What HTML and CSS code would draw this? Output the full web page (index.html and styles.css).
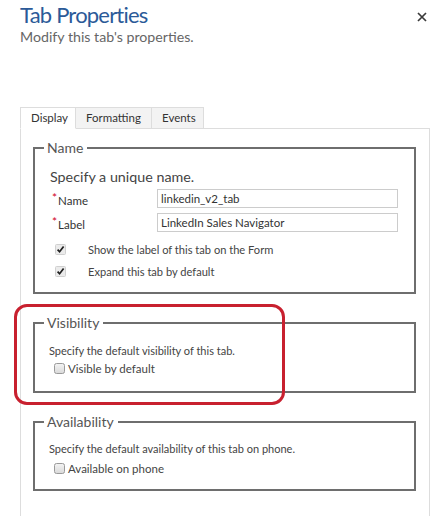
FILE: index.html
```html
<!DOCTYPE html>
<html lang="en">
<head>
<meta charset="utf-8">
<title>Tab Properties</title>
<link rel="stylesheet" href="styles.css">
</head>
<body>
<div class="dialog">
  <header class="head">
    <div class="titles">
      <h1 class="title">Tab Properties</h1>
      <p class="subtitle">Modify this tab's properties.</p>
    </div>
    <button class="close" aria-label="Close">
      <svg width="10" height="10" viewBox="0 0 10 10"><path d="M1 1L9 9M9 1L1 9" stroke="#3a3a3a" stroke-width="1.7" fill="none"/></svg>
    </button>
  </header>

  <nav class="tabs">
    <span class="tab tab-active">Display</span>
    <span class="tab">Formatting</span>
    <span class="tab">Events</span>
  </nav>

  <div class="panel">
    <fieldset class="group">
      <legend>Name</legend>
      <div class="body body-name">
        <p class="intro">Specify a unique name.</p>
        <div class="fields">
          <div class="field">
            <label class="flabel"><span class="req">*</span>Name</label>
            <input class="input" type="text" value="linkedin_v2_tab">
          </div>
          <div class="field">
            <label class="flabel"><span class="req">*</span>Label</label>
            <input class="input" type="text" value="LinkedIn Sales Navigator">
          </div>
        </div>
        <div class="checks">
          <div class="check check-wide">
            <svg class="cb" width="11" height="11" viewBox="0 0 11 11"><rect x="0.5" y="0.5" width="10" height="10" rx="1" fill="#ebebeb" stroke="#d0d0d0"/><path d="M2.6 5.6L4.6 7.8L8.6 2.6" stroke="#1e1e1e" stroke-width="1.7" fill="none"/></svg>
            <span>Show the label of this tab on the Form</span>
          </div>
          <div class="check check-wide">
            <svg class="cb" width="11" height="11" viewBox="0 0 11 11"><rect x="0.5" y="0.5" width="10" height="10" rx="1" fill="#ebebeb" stroke="#d0d0d0"/><path d="M2.6 5.6L4.6 7.8L8.6 2.6" stroke="#1e1e1e" stroke-width="1.7" fill="none"/></svg>
            <span>Expand this tab by default</span>
          </div>
        </div>
      </div>
    </fieldset>

    <fieldset class="group">
      <legend>Visibility</legend>
      <div class="body body-vis">
        <p class="desc">Specify the default visibility of this tab.</p>
        <div class="check">
          <svg class="cb" width="11" height="11" viewBox="0 0 11 11"><defs><linearGradient id="g1" x1="0" y1="0" x2="0" y2="1"><stop offset="0" stop-color="#f4f4f4"/><stop offset="1" stop-color="#d9d9d9"/></linearGradient></defs><rect x="0.5" y="0.5" width="10" height="10" rx="2" fill="url(#g1)" stroke="#9a9a9a"/></svg>
          <span>Visible by default</span>
        </div>
      </div>
    </fieldset>

    <fieldset class="group">
      <legend>Availability</legend>
      <div class="body body-avail">
        <p class="desc">Specify the default availability of this tab on phone.</p>
        <div class="check">
          <svg class="cb" width="11" height="11" viewBox="0 0 11 11"><defs><linearGradient id="g2" x1="0" y1="0" x2="0" y2="1"><stop offset="0" stop-color="#f4f4f4"/><stop offset="1" stop-color="#d9d9d9"/></linearGradient></defs><rect x="0.5" y="0.5" width="10" height="10" rx="2" fill="url(#g2)" stroke="#9a9a9a"/></svg>
          <span>Available on phone</span>
        </div>
      </div>
    </fieldset>
  </div>

  <div class="highlight" aria-hidden="true"></div>
</div>
</body>
</html>
```

FILE: styles.css
```css
* { box-sizing: border-box; }

html, body {
  margin: 0;
  padding: 0;
  background: #ffffff;
}

body {
  font-family: Lato, "Open Sans", sans-serif;
  color: #444444;
  overflow: hidden;
}

.dialog {
  position: relative;
  width: 440px;
  height: 516px;
}

.head {
  display: flex;
  justify-content: space-between;
  align-items: flex-start;
  padding: 0 13px 0 20px;
}

.title {
  margin: 2px 0 0;
  font-size: 22px;
  line-height: 26px;
  font-weight: 400;
  letter-spacing: -0.8px;
  color: #2b5a98;
}

.subtitle {
  margin: 0;
  font-size: 14.2px;
  line-height: 18px;
  color: #666666;
}

.close {
  margin-top: 12px;
  padding: 0;
  border: 0;
  background: none;
  width: 10px;
  height: 10px;
  display: block;
}

.close svg { display: block; }

.tabs {
  display: flex;
  margin: 61px 0 0 20px;
  position: relative;
  z-index: 1;
}

.tab {
  display: block;
  height: 22px;
  padding: 0 10px;
  font-size: 11.5px;
  line-height: 20px;
  color: #333333;
  background: #f3f3f3;
  border: 1px solid #dddddd;
  border-left: 0;
}

.tab:first-child { border-left: 1px solid #dddddd; }

.tab-active {
  background: #ffffff;
  border-bottom-color: #ffffff;
}

.tabs .tab:nth-child(1) { width: 56px; }
.tabs .tab:nth-child(2) { width: 76px; }
.tabs .tab:nth-child(3) { width: 52px; }

.panel {
  margin: -1px 0 0 20px;
  width: 410px;
  height: 389px;
  border: 1px solid #dddddd;
  border-bottom: 0;
  padding: 9px 13px 0 12px;
}

.group {
  margin: 0 0 19px;
  padding: 0;
  border: 2px solid #6e6e6e;
  min-width: 0;
}

.group legend {
  margin-left: 9px;
  padding: 0 4px 0 3px;
  font-size: 14px;
  line-height: 20px;
  color: #555555;
}

.body p { margin: 0; }

.body-name { padding: 10px 15px 12px; }

.intro {
  font-size: 14.3px;
  line-height: 18px;
  color: #444444;
}

.fields {
  margin-top: 3px;
  display: flex;
  flex-direction: column;
  gap: 5px;
}

.field {
  display: flex;
  align-items: flex-start;
  height: 19px;
}

.flabel {
  display: block;
  width: 107px;
  height: 16px;
  padding-left: 2px;
  margin-top: 4px;
  font-size: 11.5px;
  line-height: 16px;
  color: #333333;
}

.req {
  color: #d0021b;
  font-size: 12px;
  line-height: 0;
  vertical-align: 3px;
  margin-right: 1px;
}

.input {
  width: 241px;
  height: 19px;
  margin: 0;
  padding: 0 3px;
  border: 1px solid #cccccc;
  font-family: Lato, "Open Sans", sans-serif;
  font-size: 11.5px;
  color: #333333;
  background: #ffffff;
}

.checks {
  margin-top: 10px;
  display: flex;
  flex-direction: column;
  gap: 6px;
}

.check {
  display: flex;
  align-items: flex-start;
  gap: 3px;
  font-size: 11.5px;
  line-height: 16px;
  color: #444444;
  padding-left: 5px;
}

.check-wide {
  gap: 22px;
  font-size: 11.1px;
}

.cb {
  display: block;
  flex: none;
  margin-top: 2px;
}

.desc {
  font-size: 11px;
  line-height: 15px;
  color: #444444;
}

.body-vis { padding: 10px 14px 14px; }
.body-vis .check { margin-top: 3px; }

.body-avail { padding: 9px 14px 12px; }
.body-avail .check { margin-top: 5px; }

.highlight {
  position: absolute;
  left: 14px;
  top: 304px;
  width: 271px;
  height: 101px;
  border: 3px solid #c8202f;
  border-radius: 13px;
  pointer-events: none;
}
```
